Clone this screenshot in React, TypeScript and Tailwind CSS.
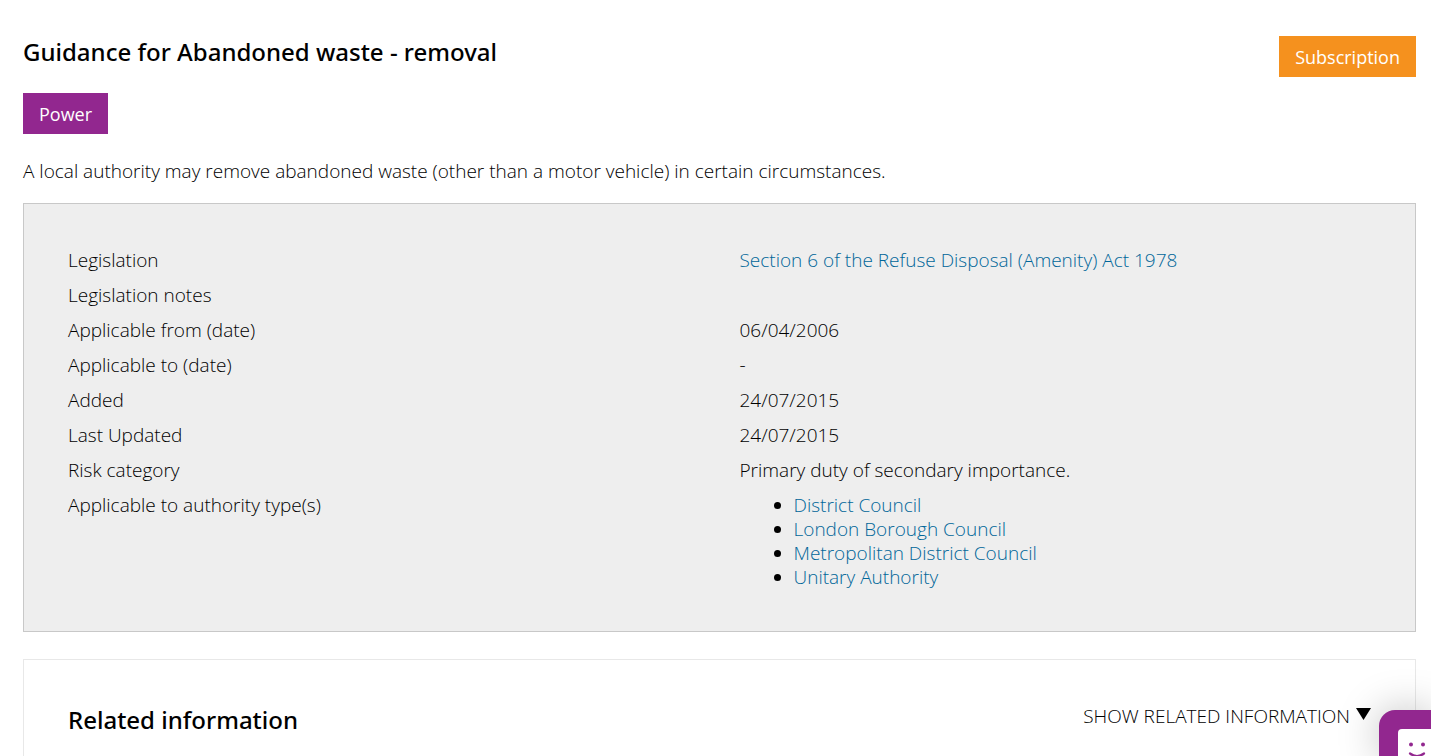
import type { ReactNode } from "react";

const authorityTypes = [
  "District Council",
  "London Borough Council",
  "Metropolitan District Council",
  "Unitary Authority",
];

const TextLink = ({ children }: { children: ReactNode }) => (
  <a href="#" className="text-[#006699] hover:underline">
    {children}
  </a>
);

const details: { label: string; value: ReactNode }[] = [
  {
    label: "Legislation",
    value: <TextLink>Section 6 of the Refuse Disposal (Amenity) Act 1978</TextLink>,
  },
  { label: "Legislation notes", value: "" },
  { label: "Applicable from (date)", value: "06/04/2006" },
  { label: "Applicable to (date)", value: "-" },
  { label: "Added", value: "24/07/2015" },
  { label: "Last Updated", value: "24/07/2015" },
  { label: "Risk category", value: "Primary duty of secondary importance." },
  {
    label: "Applicable to authority type(s)",
    value: (
      <ul className="list-disc pl-[54px] marker:text-black">
        {authorityTypes.map((type) => (
          <li key={type}>
            <TextLink>{type}</TextLink>
          </li>
        ))}
      </ul>
    ),
  },
];

const ChatWidget = () => (
  <button
    type="button"
    aria-label="Open chat"
    className="fixed bottom-0 right-0 h-[46px] w-[52px] rounded-tl-2xl bg-[#92278f] shadow-[0_0_40px_rgba(0,0,0,0.25)]"
  >
    <svg className="h-full w-full" viewBox="0 0 52 46" fill="none">
      <path d="M19 46V23a4 4 0 0 1 4-4h29v27Z" fill="white" />
      <circle cx="32" cy="34.5" r="2" fill="#92278f" />
      <circle cx="44" cy="34.5" r="2" fill="#92278f" />
      <path d="M31 43.5Q38 48.5 45 43.5" stroke="#92278f" strokeWidth="2.2" strokeLinecap="round" />
    </svg>
  </button>
);

const App = () => {
  return (
    <div className="flex min-h-screen flex-col bg-white pl-[23px] pr-[15px] pt-9 font-['Open_Sans','Noto_Sans',sans-serif] text-[19px] leading-6 font-light text-black">
      <header className="flex items-start justify-between">
        <div>
          <h1 className="font-['Noto_Sans',sans-serif] text-2xl leading-8 font-medium">
            Guidance for Abandoned waste - removal
          </h1>
          <span className="mt-[25px] inline-block bg-[#92278f] px-4 pt-[9px] pb-2 text-lg leading-6 font-normal text-white">
            Power
          </span>
        </div>
        <button type="button" className="bg-[#f5911e] px-4 pt-[9px] pb-2 text-lg leading-6 font-normal text-white">
          Subscription
        </button>
      </header>

      <p className="mt-[25px]">
        A local authority may remove abandoned waste (other than a motor vehicle) in certain circumstances.
      </p>

      <dl className="mt-5 flex flex-col gap-[11px] border border-[#c8c8c8] bg-[#eeeeee] px-11 pt-11 pb-[42px]">
        {details.map(({ label, value }) => (
          <div key={label} className="grid grid-cols-2 gap-x-10">
            <dt>{label}</dt>
            <dd>{value}</dd>
          </div>
        ))}
      </dl>

      <section className="mt-[27px] flex flex-1 items-start justify-between border border-b-0 border-[#e8e8e8] px-11 pt-11">
        <h2 className="font-['Noto_Sans',sans-serif] text-2xl leading-8 font-medium">Related information</h2>
        <button type="button" className="flex items-center gap-1.5 uppercase">
          Show related information
          <svg className="mb-1 h-3 w-[15px]" viewBox="0 0 15 12">
            <path d="M0 0H15L7.5 12Z" fill="black" />
          </svg>
        </button>
      </section>

      <ChatWidget />
    </div>
  );
};

export default App;
